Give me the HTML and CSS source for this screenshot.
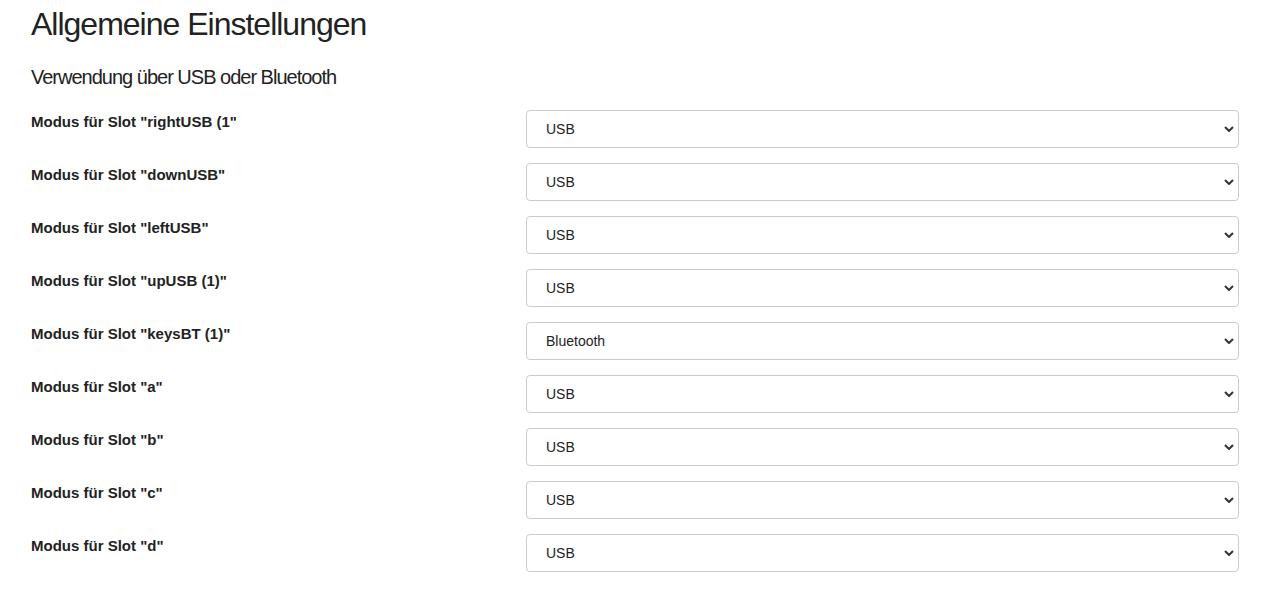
FILE: index.html
```html
<!DOCTYPE html>
<html lang="de">
<head>
<meta charset="utf-8">
<title>Allgemeine Einstellungen</title>
<link rel="stylesheet" href="styles.css">
</head>
<body>
<main class="page">
  <h1 class="title">Allgemeine Einstellungen</h1>
  <h2 class="subtitle">Verwendung über USB oder Bluetooth</h2>
  <div class="rows">
    <div class="row"><label class="label">Modus für Slot "rightUSB (1"</label><div class="sel-wrap"><select class="sel"><option>USB</option><option>Bluetooth</option></select><svg class="chev" viewBox="0 0 10 6"><path d="M1 1 L5 5 L9 1" /></svg></div></div>
    <div class="row"><label class="label">Modus für Slot "downUSB"</label><div class="sel-wrap"><select class="sel"><option>USB</option><option>Bluetooth</option></select><svg class="chev" viewBox="0 0 10 6"><path d="M1 1 L5 5 L9 1" /></svg></div></div>
    <div class="row"><label class="label">Modus für Slot "leftUSB"</label><div class="sel-wrap"><select class="sel"><option>USB</option><option>Bluetooth</option></select><svg class="chev" viewBox="0 0 10 6"><path d="M1 1 L5 5 L9 1" /></svg></div></div>
    <div class="row"><label class="label">Modus für Slot "upUSB (1)"</label><div class="sel-wrap"><select class="sel"><option>USB</option><option>Bluetooth</option></select><svg class="chev" viewBox="0 0 10 6"><path d="M1 1 L5 5 L9 1" /></svg></div></div>
    <div class="row"><label class="label">Modus für Slot "keysBT (1)"</label><div class="sel-wrap"><select class="sel"><option>USB</option><option selected>Bluetooth</option></select><svg class="chev" viewBox="0 0 10 6"><path d="M1 1 L5 5 L9 1" /></svg></div></div>
    <div class="row"><label class="label">Modus für Slot "a"</label><div class="sel-wrap"><select class="sel"><option>USB</option><option>Bluetooth</option></select><svg class="chev" viewBox="0 0 10 6"><path d="M1 1 L5 5 L9 1" /></svg></div></div>
    <div class="row"><label class="label">Modus für Slot "b"</label><div class="sel-wrap"><select class="sel"><option>USB</option><option>Bluetooth</option></select><svg class="chev" viewBox="0 0 10 6"><path d="M1 1 L5 5 L9 1" /></svg></div></div>
    <div class="row"><label class="label">Modus für Slot "c"</label><div class="sel-wrap"><select class="sel"><option>USB</option><option>Bluetooth</option></select><svg class="chev" viewBox="0 0 10 6"><path d="M1 1 L5 5 L9 1" /></svg></div></div>
    <div class="row"><label class="label">Modus für Slot "d"</label><div class="sel-wrap"><select class="sel"><option>USB</option><option>Bluetooth</option></select><svg class="chev" viewBox="0 0 10 6"><path d="M1 1 L5 5 L9 1" /></svg></div></div>
  </div>
</main>
</body>
</html>
```
FILE: styles.css
```css
html, body {
  margin: 0;
  padding: 0;
  background: #fff;
}
body {
  font-family: "Liberation Sans", Arial, sans-serif;
  color: #222;
}
.page {
  padding: 4px 48px 0 31px;
}
.title {
  margin: 0;
  font-size: 32px;
  font-weight: 400;
  letter-spacing: -1px;
  line-height: 40px;
  color: #222;
}
.subtitle {
  margin: 21px 0 0;
  font-size: 20px;
  font-weight: 400;
  letter-spacing: -1px;
  line-height: 24px;
  color: #222;
}
.rows {
  margin-top: 21px;
  display: flex;
  flex-direction: column;
  gap: 15px;
}
.row {
  display: grid;
  grid-template-columns: 495px 713px;
  align-items: start;
}
.label {
  font-size: 15px;
  font-weight: 700;
  line-height: 20px;
  padding-top: 2px;
  color: #222;
}
.sel-wrap {
  position: relative;
  height: 38px;
}
.sel {
  appearance: none;
  -webkit-appearance: none;
  width: 100%;
  height: 38px;
  box-sizing: border-box;
  border: 1px solid #ccc;
  border-radius: 4px;
  background: #fff;
  padding: 0 40px 0 19px;
  font-family: "Liberation Sans", Arial, sans-serif;
  font-size: 14px;
  color: #222;
  outline: none;
}
.chev {
  position: absolute;
  right: 5px;
  top: 16px;
  width: 10px;
  height: 6px;
  pointer-events: none;
}
.chev path {
  fill: none;
  stroke: #333;
  stroke-width: 2;
}
```
